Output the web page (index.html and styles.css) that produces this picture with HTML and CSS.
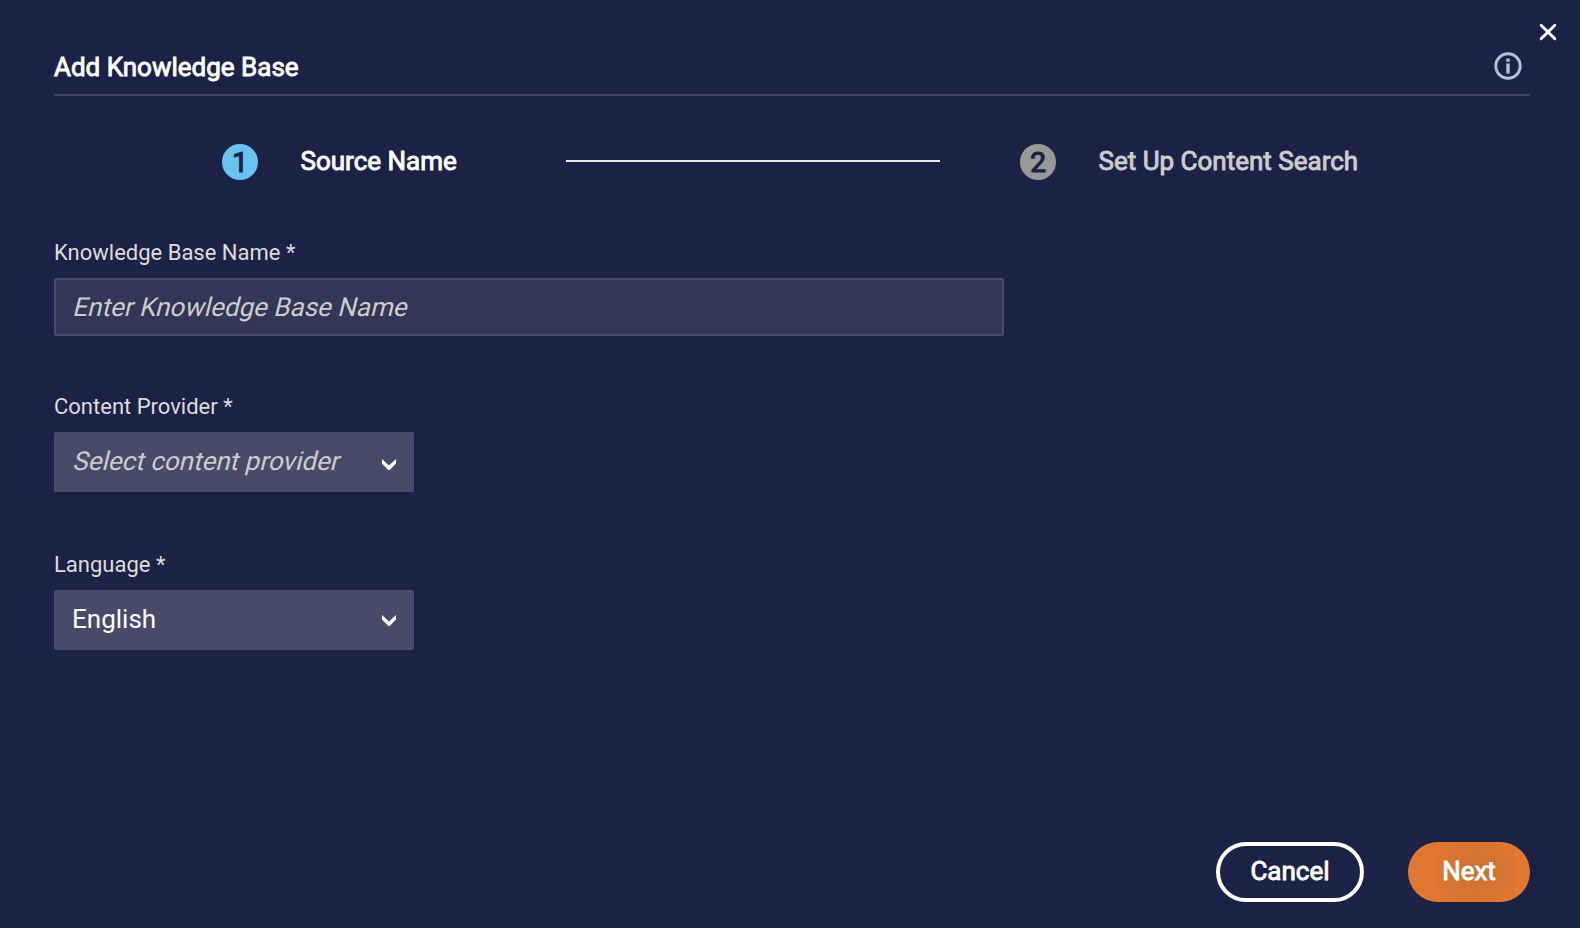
FILE: index.html
```html
<!DOCTYPE html>
<html lang="en">
<head>
<meta charset="utf-8">
<title>Add Knowledge Base</title>
<link rel="stylesheet" href="styles.css">
</head>
<body>
<main class="dialog">
  <button class="close" aria-label="Close"><svg width="20" height="20" viewBox="0 0 20 20"><path d="M3.2 3.2 16.8 16.8M16.8 3.2 3.2 16.8"/></svg></button>
  <header class="header">
    <h1 class="title strong">Add Knowledge Base</h1>
    <svg class="info" width="28" height="28" viewBox="0 0 28 28"><circle cx="14" cy="14" r="12.2"/><path class="info-mark" d="M14 11.6v9.8M14 6.6v3.2"/></svg>
  </header>
  <div class="steps">
    <div class="step step-active"><span class="badge strong">1</span><span class="strong step-name">Source Name</span></div>
    <div class="connector"></div>
    <div class="step step-next"><span class="badge strong">2</span><span class="strong step-name">Set Up Content Search</span></div>
  </div>
  <form class="form">
    <div class="field">
      <div class="label">Knowledge Base Name *</div>
      <div class="input" role="textbox" tabindex="0"><span class="placeholder">Enter Knowledge Base Name</span></div>
    </div>
    <div class="field field-provider">
      <div class="label">Content Provider *</div>
      <div class="select"><span class="placeholder">Select content provider</span><svg class="chevron chevron-low" width="14" height="12" viewBox="0 0 14 12"><path d="M0 0 7 6.6 14 0V4.4L8.2 10.6Q7 11.6 5.8 10.6L0 4.4Z"/></svg></div>
    </div>
    <div class="field field-language">
      <div class="label">Language *</div>
      <div class="select"><span class="value">English</span><svg class="chevron" width="14" height="12" viewBox="0 0 14 12"><path d="M0 0 7 6.6 14 0V4.4L8.2 10.6Q7 11.6 5.8 10.6L0 4.4Z"/></svg></div>
    </div>
  </form>
  <footer class="footer">
    <button class="button cancel strong">Cancel</button>
    <button class="button next strong">Next</button>
  </footer>
</main>
</body>
</html>
```
FILE: styles.css
```css
* { box-sizing: border-box; }
body { margin: 0; background: #1c2245; color: #fff; font-family: Roboto, sans-serif; font-size: 26px; }
.dialog { position: relative; height: 928px; padding: 40px 50px 26px 54px; display: flex; flex-direction: column; }
.strong { font-weight: 400; -webkit-text-stroke: 0.9px currentColor; }
.close { position: absolute; top: 22px; right: 22px; width: 20px; height: 20px; padding: 0; border: 0; background: none; }
.close svg { display: block; fill: none; stroke: #fff; stroke-width: 2.9; stroke-linecap: round; }
.header { height: 56px; padding-right: 8px; display: flex; justify-content: space-between; align-items: flex-start; border-bottom: 2px solid #424566; }
.title { margin: 12px 0 0; font-size: 26px; line-height: 30px; }
.info { margin-top: 12px; fill: none; stroke: #b7bfd6; stroke-width: 2.9; }
.info-mark { stroke-width: 3.4; }
.steps { height: 36px; margin: 48px 0 0 168px; display: flex; align-items: center; }
.step { display: flex; align-items: center; gap: 42.5px; }
.step-active { width: 344px; }
.badge { width: 36px; height: 36px; border-radius: 50%; display: flex; align-items: center; justify-content: center; color: #1c2245; font-size: 28px; line-height: 36px; padding-top: 1px; -webkit-text-stroke-width: 1.2px; background: #69c3ef; }
.step-name { line-height: 30px; margin-top: -2px; white-space: nowrap; }
.connector { width: 374px; height: 2px; margin: -2px 80px 0 0; background: #ebebee; }
.step-next { color: #ccc; }
.step-next .badge { color: #1c2245; background: #999; }
.form { margin-top: 58px; }
.field { display: flex; flex-direction: column; align-items: flex-start; }
.field-provider { margin-top: 56px; }
.field-language { margin-top: 58px; }
.label { height: 40px; padding-top: 1px; color: #dcdcdc; font-size: 22px; line-height: 28px; }
.input { width: 950px; height: 58px; padding: 0 16px; display: flex; align-items: center; border: 2px solid #484b68; border-radius: 2px; background: #333656; line-height: 30px; }
.select { width: 360px; height: 60px; padding: 0 18px; display: flex; align-items: center; justify-content: space-between; border-radius: 2px; background: #484b68; }
.placeholder { color: #ccc; line-height: 30px; transform: skewX(-14deg); transform-origin: 0 24px; }
.select .placeholder { margin-top: -2px; }
.value { margin-top: -2px; }
.chevron { fill: #fff; margin-top: 2px; }
.chevron-low { margin-top: 6px; }
.footer { margin-top: auto; display: flex; justify-content: flex-end; gap: 44px; }
.button { height: 60px; padding: 0 0 2px; border-radius: 30px; color: #fff; font-family: Roboto, sans-serif; font-size: 26px; }
.cancel { width: 148px; border: 4px solid #fff; background: none; }
.next { width: 122px; border: 0; background: radial-gradient(ellipse 46px 36px at 56% 50%, #c86f31, #e07731); }
```
